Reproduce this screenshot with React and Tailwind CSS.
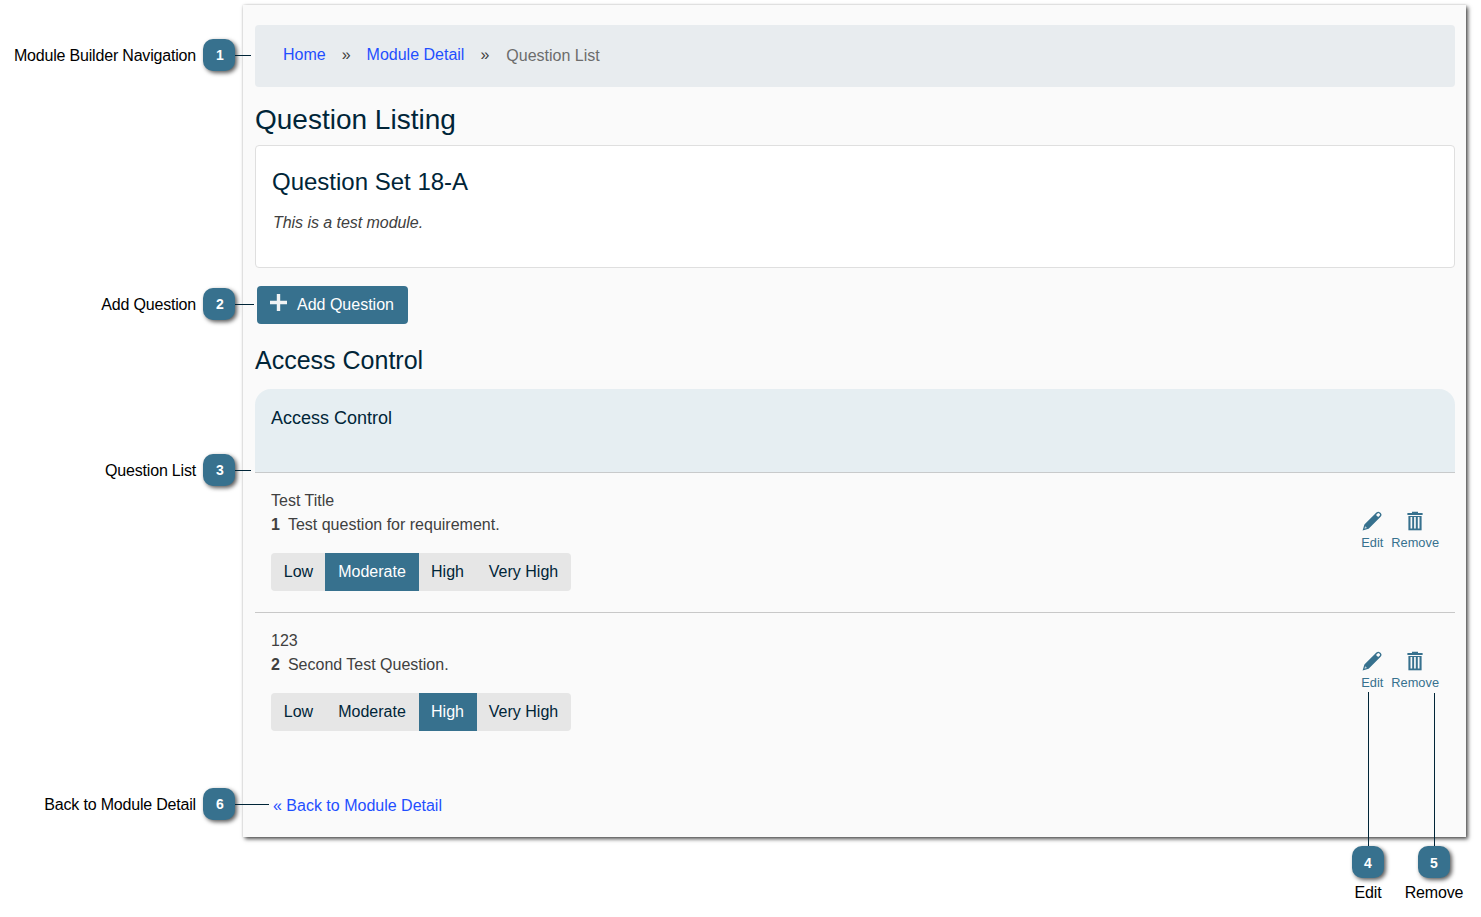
import React from "react";

const PencilIcon = () => (
  <svg width="20" height="20" viewBox="0 0 20 20" className="block">
    <path d="M0.6 19.5 L2.4 13.4 L14.4 1.6 Q16.2 -0.2 18 1.4 L18.7 2.1 Q20.4 3.9 18.6 5.7 L6.6 17.7 Z" fill="#37718e" />
    <path d="M2.4 17.7 L3.2 15.2 L5 17 Z" fill="#fafafa" opacity="0.7" />
    <path d="M14 4 L15.8 2.3 Q16.5 1.7 17.2 2.4 L17.8 3 Q18.4 3.7 17.8 4.4 L16.1 6.1 Z" fill="#fafafa" />
  </svg>
);

const TrashIcon = () => (
  <svg width="16" height="20" viewBox="0 0 16 20" className="block">
    <path d="M5 0.8h6v1.2h4.6v2H0.4v-2H5z" fill="#37718e" />
    <path d="M1.4 5h13.2v14.3H1.4z" fill="#37718e" />
    <path d="M3.5 6h1.7v11.6H3.5zM7.1 6h1.7v11.6H7.1zM10.8 6h1.7v11.6h-1.7z" fill="#fafafa" />
  </svg>
);

const Badge = ({ n, nudge }) => (
  <div className={`flex h-8 w-8 shrink-0 items-center justify-center rounded-[10px] bg-[#37718e] text-sm font-bold text-white shadow-[2px_2px_4px_rgba(0,0,0,0.65)] ${nudge}`}>
    {n}
  </div>
);

const SideCallout = ({ n, label, place, line }) => (
  <div className={`absolute left-0 flex h-8 items-center ${place}`}>
    <div className="w-[203px] whitespace-nowrap pr-[7px] pt-[2px] text-right tracking-[-0.19px] text-black">{label}</div>
    <Badge n={n} nudge="pl-[2px]" />
    <div className={`mt-px h-px bg-[#002538] ${line}`} />
  </div>
);

const BottomCallout = ({ n, label, place, line }) => (
  <div className={`absolute flex w-16 flex-col items-center ${place}`}>
    <div className={`w-px bg-[#002538] ${line}`} />
    <Badge n={n} nudge="pt-px" />
    <div className="mt-[3px] leading-6 tracking-[-0.15px] text-black">{label}</div>
  </div>
);

const LEVELS = ["Low", "Moderate", "High", "Very High"];
const WIDTHS = ["w-[54px] pl-px", "w-[94px]", "w-[58px] pr-px", "w-[94px] pr-px"];

const QuestionRow = ({ title, n, text, selected, border }) => (
  <div className={`flex h-[140px] justify-between px-4 pt-4 ${border}`}>
    <div>
      <div className="leading-6">{title}</div>
      <div className="flex gap-[8px] leading-6">
        <b>{n}</b>
        <span>{text}</span>
      </div>
      <div className="mt-4 flex h-[38px] w-[300px] overflow-hidden rounded bg-[#e6e6e6] text-[#002538]">
        {LEVELS.map((level, i) => (
          <div
            key={level}
            className={`flex items-center justify-center whitespace-nowrap pb-px ${WIDTHS[i]} ${level === selected ? "bg-[#37718e] text-white" : ""}`}
          >
            {level}
          </div>
        ))}
      </div>
    </div>
    <div className="flex gap-2 pt-[22px] text-[12.8px] leading-4 text-[#37718e]">
      <div className="flex flex-col items-center gap-1">
        <PencilIcon />
        <span>Edit</span>
      </div>
      <div className="flex flex-col items-center gap-1">
        <TrashIcon />
        <span>Remove</span>
      </div>
    </div>
  </div>
);

export default function App() {
  return (
    <div className="relative h-[917px] w-[1481px] overflow-hidden bg-white pl-[243px] pt-[5px] font-['Liberation_Sans',Arial,sans-serif] text-base text-[#404040]">
      <main className="h-[832px] w-[1223px] bg-[#fafafa] px-3 pt-5 shadow-[2px_2px_4px_rgba(0,0,0,0.7),0_0_2px_rgba(0,0,0,0.15)]">
        <nav className="flex h-[62px] w-[1200px] items-center rounded bg-[#e8ecef] pb-[3px] pl-7">
          <a className="text-[#1f4fff]">Home</a>
          <span className="px-4">»</span>
          <a className="text-[#1f4fff]">Module Detail</a>
          <span className="px-4">»</span>
          <span className="pl-px pt-[2px] text-[#6c6c6c]">Question List</span>
        </nav>
        <h1 className="h-[58px] pt-4 text-[28px] leading-[34px] text-[#002538]">Question Listing</h1>
        <section className="h-[123px] w-[1200px] rounded border border-[#dfdfdf] bg-white px-4 pt-[21px]">
          <h2 className="text-2xl leading-[30px] text-[#002538]">Question Set 18-A</h2>
          <p className="mt-[14px] pl-px italic leading-6 tracking-[-0.05px]">This is a test module.</p>
        </section>
        <button className="ml-[2px] mt-[18px] flex h-[38px] w-[151px] items-center rounded bg-[#37718e] pl-[13px] text-white">
          <svg width="17" height="17" viewBox="0 0 17 17" className="-mt-[5px] mr-[10px]">
            <path d="M6.8 0h3.4v6.8H17v3.4h-6.8V17H6.8v-6.8H0V6.8h6.8z" fill="#f1f3f4" />
          </svg>
          Add Question
        </button>
        <h2 className="h-[65px] pt-[21px] text-[25px] leading-[30px] text-[#002538]">Access Control</h2>
        <div className="w-[1200px]">
          <div className="h-[84px] rounded-t-[16px] border-b border-[#c8cacb] bg-[#e6eef2] px-4 pt-4 text-lg leading-[26px] text-[#002538]">
            Access Control
          </div>
          <QuestionRow title="Test Title" n="1" text="Test question for requirement." selected="Moderate" border="border-b border-[#c8c8c8]" />
          <QuestionRow title="123" n="2" text="Second Test Question." selected="High" border="" />
        </div>
        <a className="ml-[18px] mt-[41px] block leading-6 text-[#1f4fff]">« Back to Module Detail</a>
      </main>

      <SideCallout n="1" label="Module Builder Navigation" place="top-[39px]" line="w-4" />
      <SideCallout n="2" label="Add Question" place="top-[288px]" line="w-[19px]" />
      <SideCallout n="3" label="Question List" place="top-[454px]" line="w-4" />
      <SideCallout n="6" label="Back to Module Detail" place="top-[788px]" line="w-[34px]" />
      <BottomCallout n="4" label="Edit" place="left-[1336px] top-[692px]" line="h-[154px]" />
      <BottomCallout n="5" label="Remove" place="left-[1402px] top-[693px]" line="h-[153px]" />
    </div>
  );
}
